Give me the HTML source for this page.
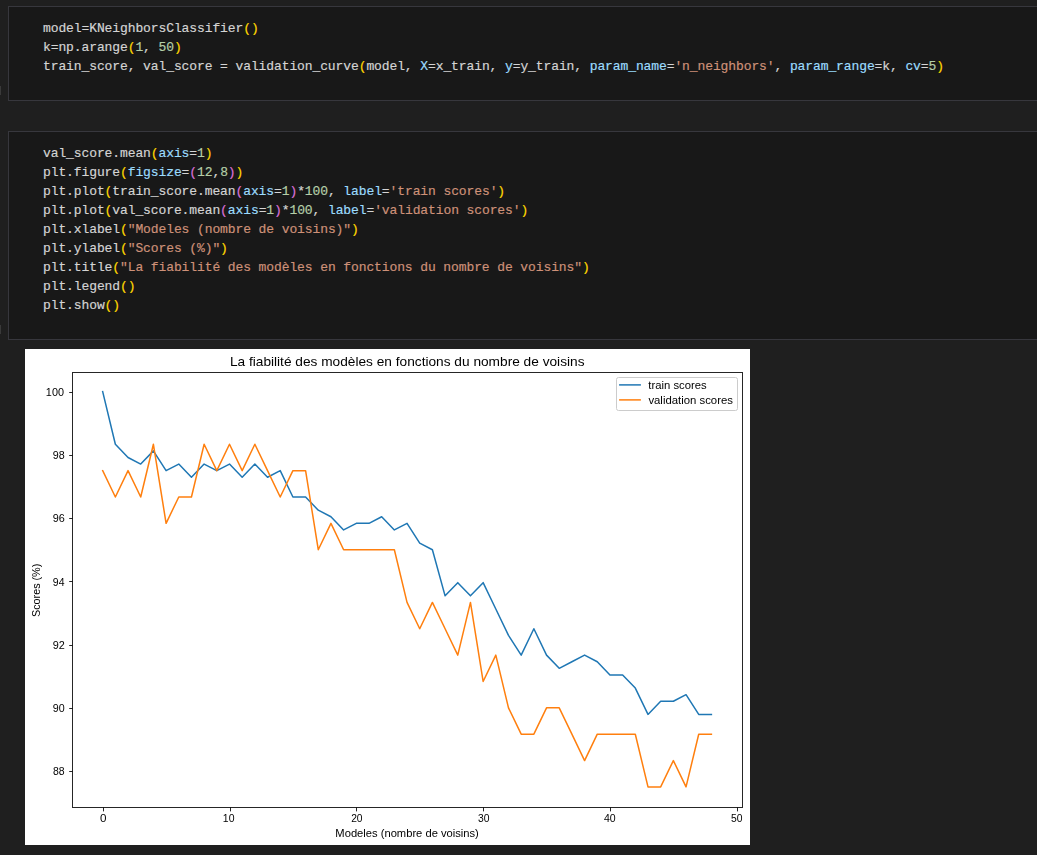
<!DOCTYPE html>
<html>
<head>
<meta charset="utf-8">
<title>notebook</title>
<style>
html,body{margin:0;padding:0;}
body{width:1037px;height:855px;overflow:hidden;background:#1f1f1f;position:relative;font-family:"Liberation Sans",sans-serif;}
.cell{position:absolute;left:8px;width:1029px;box-sizing:border-box;border:1px solid #37373d;border-right:0;background:#181818;overflow:hidden;}
.code{position:absolute;left:34px;top:12px;font-family:"Liberation Mono",monospace;font-size:13px;line-height:19px;letter-spacing:-0.102px;color:#d4d4d4;white-space:pre;-webkit-text-stroke:0.18px;}
.ln{height:19px;}
.t{color:#d4d4d4;} .g{color:#ffd700;} .o{color:#da70d6;} .n{color:#b5cea8;} .p{color:#9cdcfe;} .s{color:#ce9178;}
.sl{position:absolute;left:0;width:1px;height:9px;background:#3a3a3a;}
svg{position:absolute;left:0;top:0;will-change:transform;}
svg text{font-family:"Liberation Sans",sans-serif;fill:#000;}
.tk{font-size:10.5px;}
.ti{font-size:12.4px;}
</style>
</head>
<body>
<div class="cell" style="top:6px;height:95px;"><div class="code"><div class="ln"><span class="t">model=KNeighborsClassifier</span><span class="g">()</span></div><div class="ln"><span class="t">k=np.arange</span><span class="g">(</span><span class="n">1</span><span class="t">, </span><span class="n">50</span><span class="g">)</span></div><div class="ln"><span class="t">train_score, val_score = validation_curve</span><span class="g">(</span><span class="t">model, </span><span class="p">X</span><span class="t">=x_train, </span><span class="p">y</span><span class="t">=y_train, </span><span class="p">param_name</span><span class="t">=</span><span class="s">'n_neighbors'</span><span class="t">, </span><span class="p">param_range</span><span class="t">=k, </span><span class="p">cv</span><span class="t">=</span><span class="n">5</span><span class="g">)</span></div></div></div>
<div class="cell" style="top:131px;height:209px;"><div class="code"><div class="ln"><span class="t">val_score.mean</span><span class="g">(</span><span class="p">axis</span><span class="t">=</span><span class="n">1</span><span class="g">)</span></div><div class="ln"><span class="t">plt.figure</span><span class="g">(</span><span class="p">figsize</span><span class="t">=</span><span class="o">(</span><span class="n">12</span><span class="t">,</span><span class="n">8</span><span class="o">)</span><span class="g">)</span></div><div class="ln"><span class="t">plt.plot</span><span class="g">(</span><span class="t">train_score.mean</span><span class="o">(</span><span class="p">axis</span><span class="t">=</span><span class="n">1</span><span class="o">)</span><span class="t">*</span><span class="n">100</span><span class="t">, </span><span class="p">label</span><span class="t">=</span><span class="s">'train scores'</span><span class="g">)</span></div><div class="ln"><span class="t">plt.plot</span><span class="g">(</span><span class="t">val_score.mean</span><span class="o">(</span><span class="p">axis</span><span class="t">=</span><span class="n">1</span><span class="o">)</span><span class="t">*</span><span class="n">100</span><span class="t">, </span><span class="p">label</span><span class="t">=</span><span class="s">'validation scores'</span><span class="g">)</span></div><div class="ln"><span class="t">plt.xlabel</span><span class="g">(</span><span class="s">"Modeles (nombre de voisins)"</span><span class="g">)</span></div><div class="ln"><span class="t">plt.ylabel</span><span class="g">(</span><span class="s">"Scores (%)"</span><span class="g">)</span></div><div class="ln"><span class="t">plt.title</span><span class="g">(</span><span class="s">"La fiabilité des modèles en fonctions du nombre de voisins"</span><span class="g">)</span></div><div class="ln"><span class="t">plt.legend</span><span class="g">()</span></div><div class="ln"><span class="t">plt.show</span><span class="g">()</span></div></div></div>
<div class="sl" style="top:86px;"></div>
<div class="sl" style="top:325px;"></div>
<svg width="1037" height="855" viewBox="0 0 1037 855">
<rect x="25" y="349" width="725" height="496" fill="#fff"/>
<path d="M102.68,391.57 L115.36,444.28 L128.04,457.46 L140.72,464.05 L153.40,450.87 L166.09,470.64 L178.77,464.05 L191.45,477.22 L204.13,464.05 L216.81,470.64 L229.49,464.05 L242.18,477.22 L254.86,464.05 L267.54,477.22 L280.22,470.64 L292.90,496.99 L305.59,496.99 L318.27,510.17 L330.95,516.76 L343.63,529.94 L356.31,523.35 L368.99,523.35 L381.68,516.76 L394.36,529.94 L407.04,523.35 L419.72,543.12 L432.40,549.71 L445.09,595.83 L457.77,582.65 L470.45,595.83 L483.13,582.65 L495.81,609.01 L508.49,635.36 L521.18,655.13 L533.86,628.77 L546.54,655.13 L559.22,668.31 L571.90,661.72 L584.59,655.13 L597.27,661.72 L609.95,674.90 L622.63,674.90 L635.31,688.08 L647.99,714.43 L660.68,701.26 L673.36,701.26 L686.04,694.66 L698.72,714.43 L711.40,714.43" fill="none" stroke="#1f77b4" stroke-width="1.5" stroke-linejoin="round" stroke-linecap="square"/>
<path d="M102.68,470.64 L115.36,496.99 L128.04,470.64 L140.72,496.99 L153.40,444.28 L166.09,523.35 L178.77,496.99 L191.45,496.99 L204.13,444.28 L216.81,470.64 L229.49,444.28 L242.18,470.64 L254.86,444.28 L267.54,470.64 L280.22,496.99 L292.90,470.64 L305.59,470.64 L318.27,549.71 L330.95,523.35 L343.63,549.71 L356.31,549.71 L368.99,549.71 L381.68,549.71 L394.36,549.71 L407.04,602.42 L419.72,628.77 L432.40,602.42 L445.09,628.77 L457.77,655.13 L470.45,602.42 L483.13,681.49 L495.81,655.13 L508.49,707.84 L521.18,734.20 L533.86,734.20 L546.54,707.84 L559.22,707.84 L571.90,734.20 L584.59,760.56 L597.27,734.20 L609.95,734.20 L622.63,734.20 L635.31,734.20 L647.99,786.91 L660.68,786.91 L673.36,760.56 L686.04,786.91 L698.72,734.20 L711.40,734.20" fill="none" stroke="#ff7f0e" stroke-width="1.5" stroke-linejoin="round" stroke-linecap="square"/>
<rect x="72.5" y="372.5" width="670.0" height="435.0" fill="none" stroke="#000" stroke-opacity="0.85" stroke-width="1"/>
<path d="M103.5,807.5 v3.9 M230.5,807.5 v3.9 M356.5,807.5 v3.9 M483.5,807.5 v3.9 M610.5,807.5 v3.9 M737.5,807.5 v3.9 M72.5,771.5 h-3.3 M72.5,708.5 h-3.3 M72.5,645.5 h-3.3 M72.5,581.5 h-3.3 M72.5,518.5 h-3.3 M72.5,455.5 h-3.3 M72.5,392.5 h-3.3" stroke="#000" stroke-opacity="0.85" stroke-width="1" fill="none"/>
<text class="tk" x="100.02" y="822.00" textLength="6.47" lengthAdjust="spacingAndGlyphs">0</text>
<text class="tk" x="222.87" y="822.00" textLength="11.64" lengthAdjust="spacingAndGlyphs">10</text>
<text class="tk" x="351.17" y="822.00" textLength="11.41" lengthAdjust="spacingAndGlyphs">20</text>
<text class="tk" x="478.04" y="822.00" textLength="11.53" lengthAdjust="spacingAndGlyphs">30</text>
<text class="tk" x="603.96" y="822.00" textLength="11.72" lengthAdjust="spacingAndGlyphs">40</text>
<text class="tk" x="731.10" y="822.00" textLength="11.49" lengthAdjust="spacingAndGlyphs">50</text>
<text class="tk" x="53.00" y="775.00" textLength="11.64" lengthAdjust="spacingAndGlyphs">88</text>
<text class="tk" x="52.82" y="712.00" textLength="11.91" lengthAdjust="spacingAndGlyphs">90</text>
<text class="tk" x="52.74" y="649.00" textLength="12.09" lengthAdjust="spacingAndGlyphs">92</text>
<text class="tk" x="52.86" y="586.00" textLength="11.65" lengthAdjust="spacingAndGlyphs">94</text>
<text class="tk" x="52.71" y="522.00" textLength="12.06" lengthAdjust="spacingAndGlyphs">96</text>
<text class="tk" x="52.77" y="459.00" textLength="11.91" lengthAdjust="spacingAndGlyphs">98</text>
<text class="tk" x="45.89" y="396.00" textLength="18.10" lengthAdjust="spacingAndGlyphs">100</text>
<text class="tk" x="335.37" y="836.90" textLength="143.49" lengthAdjust="spacingAndGlyphs">Modeles (nombre de voisins)</text>
<text class="tk" transform="translate(40.20,617.06) rotate(-90)" textLength="53.37" lengthAdjust="spacingAndGlyphs">Scores (%)</text>
<text class="ti" x="229.92" y="365.90" textLength="354.58" lengthAdjust="spacingAndGlyphs">La fiabilité des modèles en fonctions du nombre de voisins</text>
<rect x="616.5" y="377.5" width="121" height="33" rx="2" ry="2" fill="#fff" fill-opacity="0.8" stroke="#ccc" stroke-width="1"/>
<path d="M619.1,384.9 H640.9" stroke="#1f77b4" stroke-width="1.5"/>
<path d="M619.1,399.9 H640.9" stroke="#ff7f0e" stroke-width="1.5"/>
<text class="tk" x="648.30" y="388.80" textLength="58.35" lengthAdjust="spacingAndGlyphs">train scores</text>
<text class="tk" x="648.40" y="403.75" textLength="84.53" lengthAdjust="spacingAndGlyphs">validation scores</text>
</svg>
</body>
</html>
